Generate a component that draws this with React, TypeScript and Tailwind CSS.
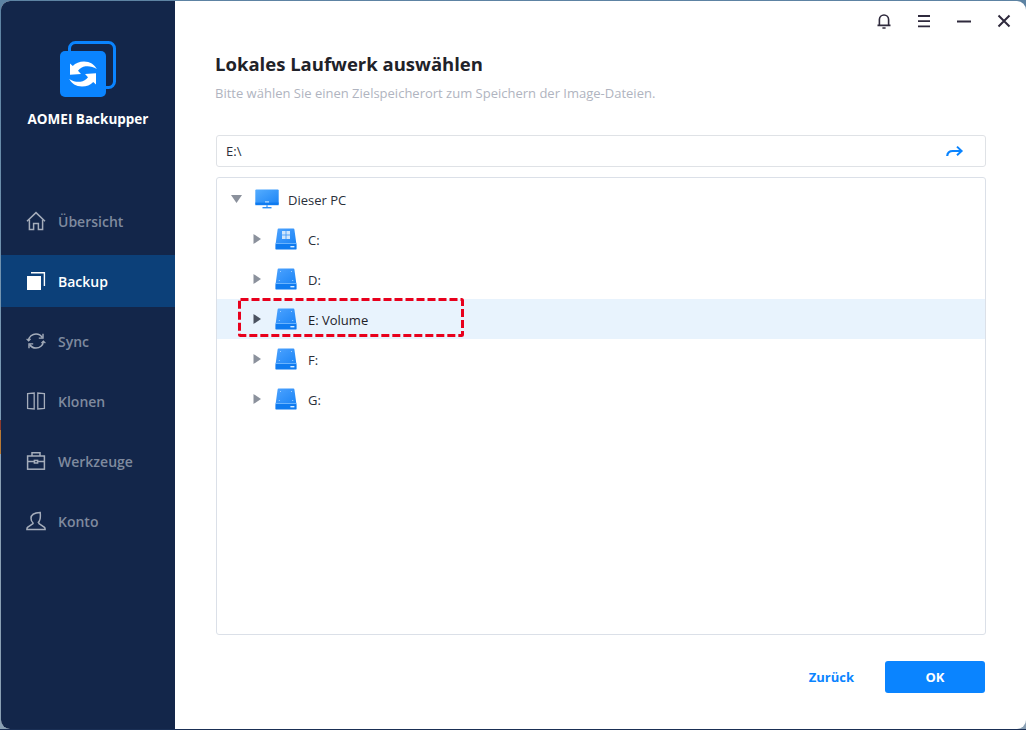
import React from "react";

const font = "font-['Open_Sans','Noto_Sans',sans-serif]";

const swoosh =
  "M10 22.5 L12.8 25 C15.5 22 19.5 20.5 24 20.5 C30 20.5 34.5 23.5 36.8 28 C33 25.5 29 24.8 25.5 25.3 C22.5 25.8 20 27.3 18 29.8 L21 33 L10 33.8 Z";

function Logo() {
  return (
    <svg width="60" height="60" viewBox="0 0 60 60" fill="none">
      <rect x="9.5" y="1.5" width="45" height="45" rx="6" stroke="#0a84ff" strokeWidth="3" />
      <rect x="0" y="10" width="46" height="46" rx="5" fill="#0a84ff" />
      <path d={swoosh} fill="#fff" />
      <path d={swoosh} fill="#fff" transform="rotate(180 23 33)" />
    </svg>
  );
}

const ic = { fill: "none", stroke: "#a5adbb", strokeWidth: 1.5 };

function NavIcon({ name }: { name: string }) {
  if (name === "home")
    return (
      <svg width="20" height="20" viewBox="0 0 20 20" {...ic}>
        <path d="M1 10.2 10 1.6l9 8.6" />
        <path d="M3.4 8.6v9.9h4.2v-6h4.8v6h4.2V8.6" />
      </svg>
    );
  if (name === "backup")
    return (
      <svg width="20" height="20" viewBox="0 0 20 20">
        <rect x="1" y="5" width="14" height="14" fill="#fff" />
        <path d="M5 1.8h13.4V15" fill="none" stroke="#fff" strokeWidth="1.4" />
      </svg>
    );
  if (name === "sync")
    return (
      <svg width="20" height="20" viewBox="0 0 20 20" {...ic}>
        <path d="M2.6 9.4C3 5.6 6.2 3 10 3c2.8 0 5 1.3 6.3 3.5" />
        <path d="M17.4 10.6C17 14.4 13.8 17 10 17c-2.8 0-5-1.3-6.3-3.5" />
        <path d="M17 2.8v4.3h-4.2" strokeWidth="1.4" />
        <path d="M3 17.2v-4.3h4.2" strokeWidth="1.4" />
        <path d="M.6 7.8l2 2 2-2M15.4 12.2l2-2 2 2" strokeWidth="1.2" />
      </svg>
    );
  if (name === "clone")
    return (
      <svg width="20" height="20" viewBox="0 0 20 20" {...ic} strokeWidth={1.3}>
        <path d="M1.6 2.6 8.2 2v16l-6.6-.6z" />
        <path d="M18.4 2.6 11.8 2v16l6.6-.6z" />
      </svg>
    );
  if (name === "tools")
    return (
      <svg width="20" height="20" viewBox="0 0 20 20" {...ic}>
        <path d="M6 5V1.8h8V5" />
        <rect x="1.6" y="5" width="16.8" height="13.2" />
        <path d="M1.6 10.6h6.6M11.8 10.6h6.6" />
        <rect x="8.4" y="9.4" width="3.2" height="2.6" />
      </svg>
    );
  return (
    <svg width="20" height="20" viewBox="0 0 20 20" {...ic}>
      <path d="M7 11.8C5.6 10.6 5 9 5 7.2 5 3.8 8 1.6 14.2 1.4c.4 4 .3 6.6-.8 8.4-.5 1-1 1.6-1.6 2" />
      <path d="M7 11.6v1L1.5 16.4c-.4.4-.6 1-.6 2.2h18.2c0-1.2-.2-1.8-.6-2.2L13 12.6v-1" />
    </svg>
  );
}

function NavItem({ name, icon, active }: { name: string; icon: string; active?: boolean }) {
  return (
    <div
      className={`flex h-[52px] items-center gap-[12px] pl-[25px] text-[14px] font-semibold ${
        active ? "bg-[#0c4079] text-white" : "text-[#7f8a9e]"
      }`}
    >
      <NavIcon name={icon} />
      <span>{name}</span>
    </div>
  );
}

function Drive({ win, id }: { win?: boolean; id: string }) {
  return (
    <svg width="22" height="22" viewBox="0 0 22 22">
      <defs>
        <linearGradient id={id} x1="0" y1="0" x2="1" y2="1">
          <stop offset="0" stopColor="#4da3ff" />
          <stop offset="1" stopColor="#1c84f5" />
        </linearGradient>
      </defs>
      <path d="M3.6 0.5h14.8a1 1 0 0 1 1 .9L21.4 16H.6L2.6 1.4a1 1 0 0 1 1-.9z" fill={`url(#${id})`} />
      <rect x="0.4" y="15.6" width="21.2" height="6" rx="1.2" fill="#0f7bf0" />
      <rect x="0.4" y="15" width="21.2" height="0.8" fill="#7fc0ff" />
      <rect x="15.4" y="18" width="4" height="1.4" fill="#d6ecff" />
      {win ? (
        <g fill="#cfe5fb">
          <rect x="7" y="3" width="3.6" height="3.6" />
          <rect x="11.4" y="3" width="3.6" height="3.6" />
          <rect x="7" y="7.4" width="3.6" height="3.6" />
          <rect x="11.4" y="7.4" width="3.6" height="3.6" />
        </g>
      ) : (
        <g fill="#9fd0ff">
          <rect x="5" y="3" width="1" height="1" />
          <rect x="16" y="3" width="1" height="1" />
          <rect x="3.8" y="12" width="1" height="1" />
          <rect x="17.2" y="12" width="1" height="1" />
        </g>
      )}
    </svg>
  );
}

function Caret({ dark }: { dark?: boolean }) {
  return (
    <svg width="8" height="10" viewBox="0 0 8 10">
      <path d="M0.5 0 8 5 0.5 10z" fill={dark ? "#4a5260" : "#8b919c"} />
    </svg>
  );
}

function DriveRow({ label, id, win, active }: { label: string; id: string; win?: boolean; active?: boolean }) {
  return (
    <div className={`flex h-10 items-center pl-[36px] ${active ? "bg-[#e8f3fd]" : ""}`}>
      <Caret dark={active} />
      <div className="ml-[14px]">
        <Drive id={id} win={win} />
      </div>
      <span className={`ml-[11px] mt-[4px] text-[13px] ${active ? "font-medium text-[#1f2229]" : "text-[#2a2f3a]"}`}>
        {label}
      </span>
    </div>
  );
}

export default function App() {
  return (
    <div
      className={`${font} h-[730px] w-[1026px] overflow-hidden bg-[linear-gradient(180deg,#5d83a3_0,#7d9cb6_420px,#8c3b2e_420px,#8c3b2e_430px,#b97a35_430px,#b97a35_454px,#8aa0b4_454px,#8aa0b4_729px,#1a2f55_729px)] pb-px pl-px pt-px`}
    >
      <div className="flex h-[728px] w-[1025px] overflow-hidden rounded-[9px] bg-white">
        <aside className="flex w-[174px] flex-col bg-[#13264a]">
          <div className="flex h-[194px] flex-col items-center pt-[40px]">
            <div className="pl-[4px]">
              <Logo />
            </div>
            <div className="mt-[8px] text-[13.5px] font-bold leading-[20px] text-white">AOMEI Backupper</div>
          </div>
          <nav className="flex flex-col gap-2">
            <NavItem name="Übersicht" icon="home" />
            <NavItem name="Backup" icon="backup" active />
            <NavItem name="Sync" icon="sync" />
            <NavItem name="Klonen" icon="clone" />
            <NavItem name="Werkzeuge" icon="tools" />
            <NavItem name="Konto" icon="user" />
          </nav>
        </aside>

        <main className="relative flex flex-1 flex-col pl-[41px] pr-[40px]">
          <div className="absolute right-[14px] top-[12px] flex items-center gap-[24px]">
            <svg width="16" height="16" viewBox="0 0 16 16" fill="none" stroke="#2f2a3d" strokeWidth="1.6">
              <path d="M1.5 12.4h13M3.4 12V6.6a4.6 4.6 0 0 1 9.2 0V12" />
              <path d="M6.4 15h3.2" />
            </svg>
            <svg width="16" height="16" viewBox="0 0 16 16" stroke="#2f2a3d" strokeWidth="1.8">
              <path d="M2 3h12M2 8.2h12M2 13.4h12" />
            </svg>
            <svg width="16" height="16" viewBox="0 0 16 16" stroke="#2f2a3d" strokeWidth="1.8">
              <path d="M1 8.5h14" />
            </svg>
            <svg width="16" height="16" viewBox="0 0 16 16" stroke="#2f2a3d" strokeWidth="2">
              <path d="M2.5 2.5l11 11M13.5 2.5l-11 11" />
            </svg>
          </div>

          <h1 className="-ml-px mt-[50px] text-[18.5px] font-bold leading-[26px] text-[#1f2229]">
            Lokales Laufwerk auswählen
          </h1>
          <p className="-ml-px mt-[7px] text-[13px] leading-[18px] text-[#b0b4c0]">
            Bitte wählen Sie einen Zielspeicherort zum Speichern der Image-Dateien.
          </p>

          <div className="mt-[33px] flex h-[32px] items-center justify-between rounded-[3px] border border-[#dfe2e6] pl-[9px] pr-[21px] text-[13px] text-[#2a2f3a]">
            <span className="mt-[1px]">E:\</span>
            <svg width="18" height="12" viewBox="0 0 18 12" fill="none" stroke="#0a84ff" strokeWidth="2.2">
              <path d="M1.2 11c.3-3.2 2.4-5 5.6-5h8.6" />
              <path d="M11 1.6 15.6 6 11 10.2" strokeWidth="2" />
            </svg>
          </div>

          <div className="relative mt-[10px] h-[458px] rounded-[3px] border border-[#dbe0e8] pt-[1px]">
            <div className="flex h-10 items-center pl-[14px]">
              <svg width="11" height="8" viewBox="0 0 11 8">
                <path d="M0 0h11L5.5 8z" fill="#8b919c" />
              </svg>
              <div className="ml-[13px]">
                <svg width="24" height="20" viewBox="0 0 24 20">
                  <defs>
                    <linearGradient id="mon" x1="0" y1="0" x2="1" y2="1">
                      <stop offset="0" stopColor="#55adff" />
                      <stop offset="1" stopColor="#1c84f5" />
                    </linearGradient>
                  </defs>
                  <rect x="0.3" y="0.5" width="23.4" height="14.5" rx="1" fill="url(#mon)" />
                  <rect x="0.3" y="13.6" width="23.4" height="2.6" fill="#0f7bf0" />
                  <rect x="10" y="12.4" width="4" height="1" fill="#d6ecff" />
                  <rect x="11" y="16" width="2" height="2" fill="#7fbcff" />
                  <rect x="7.5" y="18" width="9" height="1.4" fill="#2b8df5" />
                </svg>
              </div>
              <span className="ml-[9px] mt-[4px] text-[13px] text-[#2a2f3a]">Dieser PC</span>
            </div>
            <DriveRow label="C:" id="dc" win />
            <DriveRow label="D:" id="dd" />
            <DriveRow label="E: Volume" id="de" active />
            <DriveRow label="F:" id="df" />
            <DriveRow label="G:" id="dg" />
            <svg className="absolute left-[21px] top-[120px]" width="226" height="39" fill="none">
              <rect x="1.5" y="1.5" width="223" height="36" rx="1" stroke="#e8001c" strokeWidth="3" strokeDasharray="8 3" />
            </svg>
          </div>

          <div className="mt-[26px] flex items-center justify-end pr-px">
            <span className="mt-[2px] text-[13px] font-bold text-[#0a84ff]">Zurück</span>
            <button className="ml-[31px] h-[32px] w-[100px] rounded-[3px] bg-[#0a84ff] pt-[2px] text-[13px] font-bold text-white">
              OK
            </button>
          </div>
        </main>
      </div>
    </div>
  );
}
